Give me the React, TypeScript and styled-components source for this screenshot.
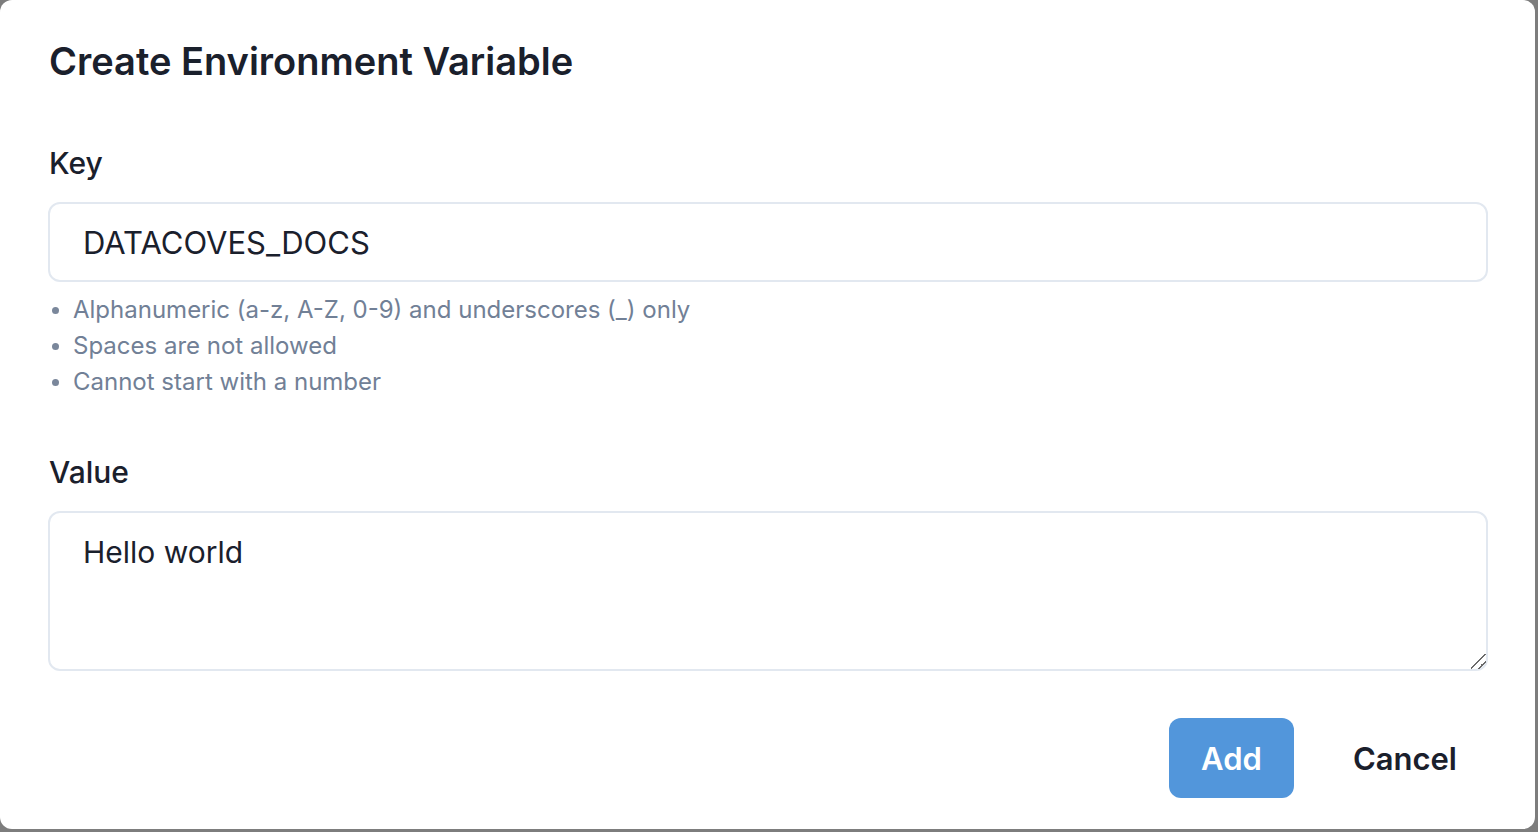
import React from "react"
import styled, { createGlobalStyle } from "styled-components"

const GlobalStyle = createGlobalStyle`
  html, body {
    margin: 0;
    padding: 0;
    background: #7d7d7d;
    font-family: "Inter", "Noto Sans", sans-serif;
    color: #1a202c;
  }
  * {
    box-sizing: border-box;
  }
`

const Dialog = styled.div`
  width: 1535px;
  height: 829px;
  background: #ffffff;
  border-radius: 12px;
  padding: 37px 48px 0 48px;
  display: flex;
  flex-direction: column;
`

const Title = styled.h2`
  margin: 0;
  font-size: 38px;
  line-height: 48px;
  font-weight: 600;
  padding-left: 1px;
`

const Field = styled.div<{ $top: number }>`
  display: flex;
  flex-direction: column;
  margin-top: ${(p) => p.$top}px;
`

const Label = styled.label`
  font-size: 30px;
  line-height: 40px;
  font-weight: 500;
  padding-left: 1px;
  margin-bottom: 19px;
`

const Input = styled.input`
  width: 1440px;
  height: 80px;
  border: 2px solid #e2e8f0;
  border-radius: 12px;
  padding: 0 33px;
  font-family: inherit;
  font-size: 31px;
  color: #1a202c;
  outline: none;
  background: #fff;
`

const TextArea = styled.textarea`
  width: 1440px;
  height: 160px;
  border: 2px solid #e2e8f0;
  border-radius: 12px;
  padding: 19px 33px;
  font-family: inherit;
  font-size: 30px;
  line-height: 40px;
  color: #1a202c;
  outline: none;
  background: #fff;
  resize: vertical;

  &::-webkit-scrollbar {
    width: 18px;
    height: 18px;
  }

  &::-webkit-resizer {
    background: linear-gradient(
      135deg,
      transparent 0 44%,
      #6b6b6b 44% 53%,
      transparent 53% 70%,
      #6b6b6b 70% 79%,
      transparent 79%
    );
  }
`

const Hints = styled.ul`
  margin: 10px 0 0 0;
  padding: 0;
  list-style: none;
  color: #718096;
  font-size: 24px;
  line-height: 36px;
`

const Hint = styled.li`
  display: flex;
  align-items: center;
  gap: 14px;

  &::before {
    content: "";
    width: 7px;
    height: 7px;
    margin-left: 4px;
    border-radius: 50%;
    background: #7a879b;
    flex-shrink: 0;
  }
`

const Footer = styled.div`
  display: flex;
  justify-content: flex-end;
  align-items: center;
  gap: 26px;
  margin-top: 47px;
  width: 1442px;
`

const Button = styled.button<{ $primary?: boolean }>`
  height: 80px;
  padding: 0 ${(p) => (p.$primary ? 32 : 33)}px;
  border: none;
  border-radius: 12px;
  font-family: inherit;
  font-size: 31px;
  font-weight: 600;
  background: ${(p) => (p.$primary ? "#5296db" : "transparent")};
  color: ${(p) => (p.$primary ? "#ffffff" : "#1a202c")};
  cursor: pointer;
`

const hints = [
  "Alphanumeric (a-z, A-Z, 0-9) and underscores (_) only",
  "Spaces are not allowed",
  "Cannot start with a number",
]

export default function App() {
  return (
    <>
      <GlobalStyle />
      <Dialog>
        <Title>Create Environment Variable</Title>
        <Field $top={58}>
          <Label>Key</Label>
          <Input defaultValue="DATACOVES_DOCS" />
          <Hints>
            {hints.map((h) => (
              <Hint key={h}>{h}</Hint>
            ))}
          </Hints>
        </Field>
        <Field $top={52}>
          <Label>Value</Label>
          <TextArea defaultValue="Hello world" />
        </Field>
        <Footer>
          <Button $primary>Add</Button>
          <Button>Cancel</Button>
        </Footer>
      </Dialog>
    </>
  )
}
